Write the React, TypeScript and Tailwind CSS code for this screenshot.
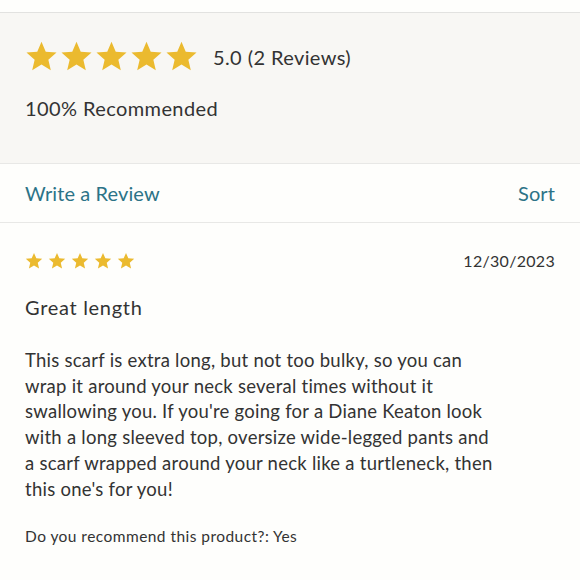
const gold = 'text-[#ebba2f]'

function Star({ size }: { size: number }) {
  return (
    <svg width={size} height={size} viewBox="0 0 24 24" aria-hidden="true" className={gold}>
      <path
        fill="currentColor"
        d="M12 1.2l3.09 7.26 7.86.68-5.96 5.18 1.78 7.68L12 17.9l-6.77 4.1 1.78-7.68L1.05 9.14l7.86-.68z"
      />
    </svg>
  )
}

export default function App() {
  return (
    <div
      className="h-[580px] w-[580px] overflow-hidden bg-[#fefefc] text-[#333333]"
      style={{ fontFamily: 'Lato, "Open Sans", sans-serif' }}
    >
      <div className="h-[13px] border-b border-[#e2e2e0]" />

      <div className="h-[151px] border-b border-[#e8e8e6] bg-[#f8f7f4] px-[25px] pt-[27px]">
        <div className="flex items-center gap-[15px]">
          <div className="flex items-center gap-[2px]">
            {[0, 1, 2, 3, 4].map((i) => (
              <Star key={i} size={33} />
            ))}
          </div>
          <span className="text-[20px] tracking-[0.4px]">5.0 (2 Reviews)</span>
        </div>
        <div className="mt-[20px] text-[20px] tracking-[0.4px]">100% Recommended</div>
      </div>

      <div className="flex h-[59px] items-center justify-between border-b border-[#e8e8e6] px-[25px] text-[20px] tracking-[0.1px] text-[#2c7387]">
        <span>Write a Review</span>
        <span>Sort</span>
      </div>

      <div className="px-[25px] pt-[26px]">
        <div className="flex items-center justify-between">
          <div className="flex items-center gap-[5px]">
            {[0, 1, 2, 3, 4].map((i) => (
              <Star key={i} size={18} />
            ))}
          </div>
          <span className="text-[16px] tracking-[0.3px]">12/30/2023</span>
        </div>
        <div className="mt-[19px] text-[20px] tracking-[0.7px]">Great length</div>
        <p className="mt-[26px] w-[475px] text-[18.5px] leading-[25.7px] tracking-[0.25px]">
          This scarf is extra long, but not too bulky, so you can wrap it around your neck several
          times without it swallowing you. If you're going for a Diane Keaton look with a long
          sleeved top, oversize wide-legged pants and a scarf wrapped around your neck like a
          turtleneck, then this one's for you!
        </p>
        <div className="mt-[23px] text-[15.5px] tracking-[0.45px]">Do you recommend this product?: Yes</div>
      </div>
    </div>
  )
}
